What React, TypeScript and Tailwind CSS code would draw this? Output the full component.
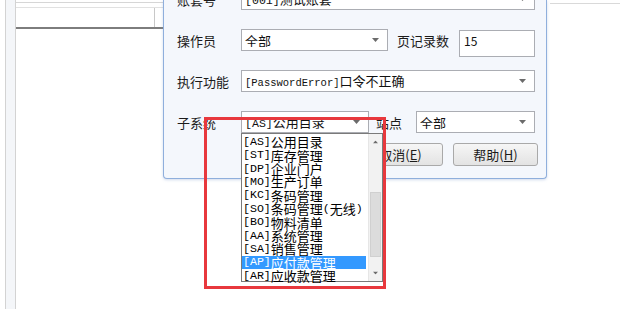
const cjk = { fontFamily: '"Noto Sans CJK SC", "Liberation Sans", sans-serif' };
const mono = { fontFamily: '"Liberation Mono", "Noto Sans CJK SC", monospace' };

const subsystems = [
  ["AS", "公用目录"],
  ["ST", "库存管理"],
  ["DP", "企业门户"],
  ["MO", "生产订单"],
  ["KC", "条码管理"],
  ["SO", "条码管理", "无线"],
  ["BO", "物料清单"],
  ["AA", "系统管理"],
  ["SA", "销售管理"],
  ["AP", "应付款管理"],
  ["AR", "应收款管理"],
];

const Arrow = ({ className = "" }: { className?: string }) => (
  <svg width="7" height="4" viewBox="0 0 7 4" className={className}>
    <path d="M0 0 L7 0 L3.5 4 Z" fill="#6b6b6b" />
  </svg>
);

const Label = ({ text, width }: { text: string; width: string }) => (
  <div className={`${width} shrink-0 text-[13px] text-[#1b1b1b] leading-none`} style={cjk}>
    {text}
  </div>
);

const Select = ({ width, children }: { width: string; children: React.ReactNode }) => (
  <div className={`${width} h-[22px] shrink-0 flex items-center justify-between border border-[#abadb3] bg-white pl-[3px]`}>
    <div className="text-[13px] text-[#111] leading-none whitespace-nowrap overflow-hidden" style={cjk}>
      {children}
    </div>
    <Arrow className="mr-[8px] shrink-0" />
  </div>
);

const Ascii = ({ text }: { text: string }) => (
  <span className="text-[11.6px]" style={mono}>{text}</span>
);

const Button = ({ text, hot }: { text: string; hot: string }) => (
  <button className="w-[85px] h-[23px] rounded-[3px] border border-[#a9a9a9] bg-gradient-to-b from-[#f6f6f6] to-[#e3e3e3] text-[13px] text-[#1b1b1b] leading-none" style={cjk}>
    {text}(<span className="underline">{hot}</span>)
  </button>
);

export default function App() {
  return (
    <div className="relative w-[620px] h-[309px] overflow-hidden bg-white flex">
      {/* window behind the dialog */}
      <div className="w-[163px] h-full flex shrink-0">
        <div className="w-[5px]" />
        <div className="w-[11px] h-full bg-[#f4f6f9] border-l border-r border-[#d3d3d3]" />
        <div className="flex-1 flex flex-col">
          <div className="h-[5px] mt-[2px] border-t border-[#d6d6d6]" />
          <div className="h-[22px] flex border-t border-[#e1e1e1] border-b-2 border-b-[#7d7d7d]">
            <div className="w-[139px] border-r border-[#c8c8c8]" />
          </div>
          <div className="flex-1 bg-white" />
        </div>
      </div>

      {/* dialog */}
      <div className="w-[384px] h-[179px] shrink-0 border-x border-b border-[#8fafdc] rounded-b-[4px] bg-[#f4f7fc] shadow-[0_1px_3px_rgba(120,150,200,0.35)] pl-[13px] pr-[10px]">
        <div className="-mt-[12px] flex flex-col gap-[19px]">
          <div className="h-[22px] flex items-center">
            <Label text="账套号" width="w-[64px]" />
            <Select width="w-[294px]">
              <Ascii text="[001]" />测试账套
            </Select>
          </div>
          <div className="h-[22px] flex items-center">
            <Label text="操作员" width="w-[64px]" />
            <Select width="w-[147px]">全部</Select>
            <div className="ml-[9px]">
              <Label text="页记录数" width="w-[62px]" />
            </div>
            <div className="w-[76px] h-[27px] self-start mt-[1px] border border-[#abadb3] bg-white pl-[4px] pt-[4px] text-[12px] text-[#111] leading-none" style={cjk}>
              15
            </div>
          </div>
          <div className="h-[22px] flex items-center">
            <Label text="执行功能" width="w-[64px]" />
            <Select width="w-[294px]">
              <span className="text-[10.5px]" style={mono}>[PasswordError]</span>口令不正确
            </Select>
          </div>
          <div className="h-[22px] flex items-center">
            <Label text="子系统" width="w-[64px]" />
            <Select width="w-[128px]">
              <Ascii text="[AS]" />公用目录
            </Select>
            <div className="ml-[7px]">
              <Label text="站点" width="w-[40px]" />
            </div>
            <Select width="w-[119px]">全部</Select>
          </div>
        </div>
        <div className="mt-[10px] -mr-[2px] flex justify-end gap-[10px]">
          <Button text="取消" hot="E" />
          <Button text="帮助" hot="H" />
        </div>
      </div>

      {/* window on the right */}
      <div className="flex-1 h-full">
        <div className="mt-[3px] ml-[3px] border-t border-[#d9d9d9]" />
      </div>

      {/* open list of the subsystem select */}
      <div className="absolute left-[241px] top-[133px] w-[142px] h-[149px] border border-[#7a7a7a] bg-white flex">
        <div className="flex-1 pt-[1px] pr-[2px]">
          {subsystems.map(([code, name, extra]) => (
            <div
              key={code}
              className={`h-[13.4px] pl-[1px] flex items-center whitespace-nowrap text-[13px] leading-none ${code === "AP" ? "bg-[#3399ff] text-white" : "text-black"}`}
              style={cjk}
            >
              <Ascii text={`[${code}]`} />
              {name}
              {extra && (
                <>
                  <Ascii text="(" />
                  {extra}
                  <Ascii text=")" />
                </>
              )}
            </div>
          ))}
        </div>
        <div className="w-[14px] h-full bg-[#f2f2f2] border-l border-[#e6e6e6] flex flex-col">
          <div className="h-[16px] flex items-center justify-center">
            <Arrow className="rotate-180 scale-75" />
          </div>
          <div className="flex-1">
            <div className="mt-[42px] h-[65px] mx-[1px] bg-[#dcdcdc] border border-[#d0d0d0]" />
          </div>
          <div className="h-[16px] flex items-center justify-center">
            <Arrow className="scale-75" />
          </div>
        </div>
      </div>

      {/* red annotation frame */}
      <div className="absolute left-[204px] top-[117px] w-[182px] h-[172px] border-[3px] border-[#e8383d]" />
    </div>
  );
}
